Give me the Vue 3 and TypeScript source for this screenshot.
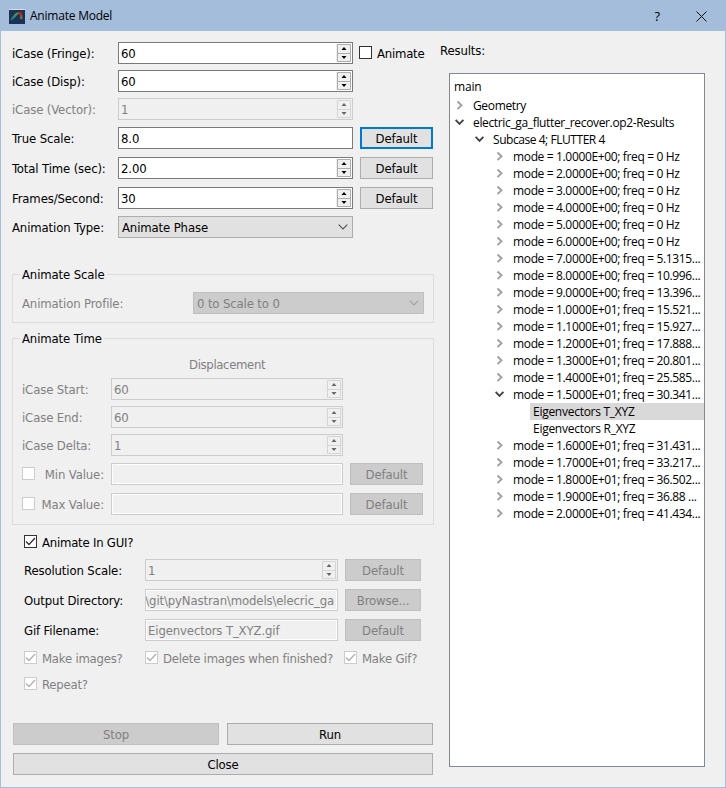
<script setup lang="ts">
interface SpinRow { label: string; value: string; cls: string; spin: boolean; disabled?: boolean; check?: boolean; button?: boolean; focus?: boolean }
interface TreeRow { level: number; text: string; state: 'open' | 'closed' | 'leaf'; selected?: boolean }

const topRows: SpinRow[] = [
  { label: 'iCase (Fringe):', value: '60', cls: 'r-first', spin: true, check: true },
  { label: 'iCase (Disp):', value: '60', cls: 'r-case', spin: true },
  { label: 'iCase (Vector):', value: '1', cls: 'r-case', spin: true, disabled: true },
  { label: 'True Scale:', value: '8.0', cls: 'r-scale', spin: false, button: true, focus: true },
  { label: 'Total Time (sec):', value: '2.00', cls: 'r-time', spin: true, button: true },
  { label: 'Frames/Second:', value: '30', cls: 'r-time', spin: true, button: true },
]
const timeRows = [
  { label: 'iCase Start:', value: '60' },
  { label: 'iCase End:', value: '60' },
  { label: 'iCase Delta:', value: '1' },
]
const limits = ['Min Value:', 'Max Value:']

const mode = (n: string, freq: string, open = false): TreeRow => ({
  level: 2, text: `mode = ${n}; freq = ${freq}`, state: open ? 'open' : 'closed',
})
const tree: TreeRow[] = [
  { level: 0, text: 'Geometry', state: 'closed' },
  { level: 0, text: 'electric_ga_flutter_recover.op2-Results', state: 'open' },
  { level: 1, text: 'Subcase 4; FLUTTER 4', state: 'open' },
  mode('1.0000E+00', '0 Hz'),
  mode('2.0000E+00', '0 Hz'),
  mode('3.0000E+00', '0 Hz'),
  mode('4.0000E+00', '0 Hz'),
  mode('5.0000E+00', '0 Hz'),
  mode('6.0000E+00', '0 Hz'),
  mode('7.0000E+00', '5.1315...'),
  mode('8.0000E+00', '10.996...'),
  mode('9.0000E+00', '13.396...'),
  mode('1.0000E+01', '15.521...'),
  mode('1.1000E+01', '15.927...'),
  mode('1.2000E+01', '17.888...'),
  mode('1.3000E+01', '20.801...'),
  mode('1.4000E+01', '25.585...'),
  mode('1.5000E+01', '30.341...', true),
  { level: 3, text: 'Eigenvectors T_XYZ', state: 'leaf', selected: true },
  { level: 3, text: 'Eigenvectors R_XYZ', state: 'leaf' },
  mode('1.6000E+01', '31.431...'),
  mode('1.7000E+01', '33.217...'),
  mode('1.8000E+01', '36.502...'),
  mode('1.9000E+01', '36.88 ...'),
  mode('2.0000E+01', '41.434...'),
]
</script>

<template>
  <div class="window">
    <header class="titlebar">
      <svg class="app-icon" width="16" height="15" viewBox="0 0 16 15">
        <defs>
          <linearGradient id="rainbow" x1="0" y1="1" x2="1" y2="0">
            <stop offset="0" stop-color="#1f5fb0" />
            <stop offset=".35" stop-color="#1faa6a" />
            <stop offset=".6" stop-color="#6ca828" />
            <stop offset=".8" stop-color="#c8441c" />
            <stop offset="1" stop-color="#a02418" />
          </linearGradient>
        </defs>
        <rect width="16" height="15" fill="#1d3157" />
        <rect width="16" height="1" fill="#d8dce4" />
        <path d="M2 11 L8 4.5 L12 3.8 L12.4 10" fill="none" stroke="url(#rainbow)" stroke-width="2.2" opacity=".85" />
        <path d="M5 6.5 L9 4" stroke="#28a850" stroke-width="1.4" />
      </svg>
      <span class="title">Animate Model</span>
      <span class="help">?</span>
      <svg class="close" width="11" height="11" viewBox="0 0 11 11"><path d="M.5 .5 L10.5 10.5 M10.5 .5 L.5 10.5" stroke="#111" fill="none" /></svg>
    </header>

    <main class="content">
      <section class="left">
        <div class="top-form">
          <div v-for="r in topRows" :key="r.label" class="row" :class="[r.cls, { disabled: r.disabled }]">
            <span class="label t">{{ r.label }}</span>
            <div class="field" :class="{ disabled: r.disabled }">
              <span class="value t">{{ r.value }}</span>
              <span v-if="r.spin" class="spin"><svg viewBox="0 0 14 18"><path d="M7 3 L9.5 6 H4.5 Z M4.5 12 H9.5 L7 15 Z" /><path class="divider" d="M.5 .5 H13.5 V17.5 H.5 Z M0 9.5 H14" /></svg></span>
            </div>
            <div v-if="r.check" class="check-item"><span class="box"></span><span class="t">Animate</span></div>
            <button v-if="r.button" class="btn" :class="{ focus: r.focus }">Default</button>
          </div>
          <div class="row r-type">
            <span class="label t">Animation Type:</span>
            <div class="combo"><span class="t">Animate Phase</span><svg width="10" height="6" viewBox="0 0 10 6"><path d="M.7 .7 L5 5 L9.3 .7" /></svg></div>
          </div>
        </div>

        <div class="group scale">
          <span class="legend">Animate Scale</span>
          <div class="profile disabled">
            <span class="t">Animation Profile:</span>
            <div class="combo disabled"><span class="t">0 to Scale to 0</span><svg width="10" height="6" viewBox="0 0 10 6"><path d="M.7 .7 L5 5 L9.3 .7" /></svg></div>
          </div>
        </div>

        <div class="group time">
          <span class="legend">Animate Time</span>
          <div class="disp disabled">Displacement</div>
          <div class="time-rows">
            <div v-for="r in timeRows" :key="r.label" class="trow disabled">
              <span class="t">{{ r.label }}</span>
              <div class="field disabled">
                <span class="value t">{{ r.value }}</span>
                <span class="spin"><svg viewBox="0 0 14 18"><path d="M7 3 L9.5 6 H4.5 Z M4.5 12 H9.5 L7 15 Z" /><path class="divider" d="M.5 .5 H13.5 V17.5 H.5 Z M0 9.5 H14" /></svg></span>
              </div>
            </div>
          </div>
          <div class="limit-rows">
            <div v-for="l in limits" :key="l" class="trow disabled">
              <div class="limit"><span class="box dim"></span><span class="t">{{ l }}</span></div>
              <div class="field disabled line"></div>
              <button class="btn disabled">Default</button>
            </div>
          </div>
        </div>

        <div class="gui">
          <div class="check-item main-check"><span class="box"><svg viewBox="0 0 11 11"><path d="M1 5.5 L4 8.5 L10 2" /></svg></span><span class="t">Animate In GUI?</span></div>
          <div class="grow">
            <span class="t">Resolution Scale:</span>
            <div class="field disabled"><span class="value t">1</span><span class="spin"><svg viewBox="0 0 14 18"><path d="M7 3 L9.5 6 H4.5 Z M4.5 12 H9.5 L7 15 Z" /><path class="divider" d="M.5 .5 H13.5 V17.5 H.5 Z M0 9.5 H14" /></svg></span></div>
            <button class="btn disabled">Default</button>
          </div>
          <div class="grow">
            <span class="t">Output Directory:</span>
            <div class="field disabled line path"><span class="value t">\git\pyNastran\models\elecric_ga</span></div>
            <button class="btn disabled">Browse...</button>
          </div>
          <div class="grow">
            <span class="t">Gif Filename:</span>
            <div class="field disabled line"><span class="value t">Eigenvectors T_XYZ.gif</span></div>
            <button class="btn disabled">Default</button>
          </div>
          <div class="checks">
            <div v-for="c in ['Make images?', 'Delete images when finished?', 'Make Gif?', 'Repeat?']" :key="c" class="check-item disabled">
              <span class="box dim"><svg viewBox="0 0 11 11"><path d="M1 5.5 L4 8.5 L10 2" /></svg></span><span class="t">{{ c }}</span>
            </div>
          </div>
        </div>

        <div class="actions">
          <button class="btn disabled">Stop</button>
          <button class="btn">Run</button>
          <button class="btn wide">Close</button>
        </div>
      </section>

      <section class="right">
        <div class="results">Results:</div>
        <div class="tree">
          <div class="tree-head">main</div>
          <div v-for="(t, i) in tree" :key="i" class="node" :class="['l' + t.level, { selected: t.selected }]">
            <span class="arrow">
              <svg v-if="t.state === 'closed'" width="9" height="11" viewBox="0 0 9 11"><path d="M2.5 1.5 L6.5 5.3 L2.5 9.1" stroke="#a0a0a0" /></svg>
              <svg v-else-if="t.state === 'open'" width="10" height="11" viewBox="0 0 10 11"><path d="M.6 2.8 L4.5 6.8 L8.4 2.8" stroke="#404040" /></svg>
            </span>
            <span class="node-text">{{ t.text }}</span>
          </div>
        </div>
      </section>
    </main>
  </div>
</template>

<style>
body { margin: 0; background: #f0f0f0; }
</style>

<style scoped>
* { box-sizing: border-box; }
.window {
  width: 726px; height: 788px; overflow: hidden; background: #f0f0f0;
  border: 1px solid #a4bddb; color: #000;
  font: 13px/16px "DejaVu Sans Condensed", "DejaVu Sans", sans-serif;
  white-space: nowrap;
  display: flex; flex-direction: column;
}
.titlebar {
  height: 30px; flex: none; background: #a4bddb; display: flex; align-items: center;
  padding: 0 18px 0 8px; font-family: "Open Sans", "Noto Sans", sans-serif; font-size: 12px;
}
.title { margin-left: 5px; flex: 1; letter-spacing: -.22px; }
.help { margin-right: 36px; font-size: 13px; }
.content { display: flex; flex: 1; min-height: 0; }
.left, .results { font-stretch: condensed; letter-spacing: -.13px; }
.left { width: 433px; padding-left: 11px; }
.t { padding-top: 2px; }
.top-form { padding-top: 11px; }
.row { display: grid; grid-template-columns: 106px 235px 73px; height: 22px; align-items: center; }
.row > .btn { margin-left: 7px; width: 73px; }
.row > .check-item { margin-left: 6px; }
.row > .check-item .box { margin-top: -1px; }
.r-case { margin-top: 6px; }
.r-scale { margin-top: 7px; }
.r-time { margin-top: 8px; }
.r-type { margin-top: 7px; }
.disabled { color: #808080; }
.field {
  height: 22px; background: #fff; border: 1px solid #7a7a7a; display: flex; align-items: center;
  padding: 0 1px 0 2px; overflow: hidden;
}
.field.disabled { background: #f0f0f0; border-color: #ccc; }
.field.line { box-shadow: inset 0 0 0 1px #fff; }
.value { flex: 1; }
.spin { width: 14px; height: 18px; background: #f0f0f0; box-shadow: -1px 0 #eee; }
.spin svg { display: block; width: 14px; height: 18px; fill: #000; }
.spin .divider { fill: none; stroke: #acacac; }
.disabled .spin svg { fill: #666; }
.disabled .spin .divider { stroke: #d5d5d5; }
.btn {
  height: 22px; padding: 2px 0 0; font: inherit; letter-spacing: inherit; color: #000; background: #e1e1e1;
  border: 1px solid #adadad; border-radius: 0; text-align: center;
}
.btn.focus { border: 2px solid #0078d7; }
.btn.disabled { background: #ccc; border-color: #bfbfbf; color: #808080; }
.check-item { display: flex; align-items: center; gap: 5px; letter-spacing: -.22px; }
.box { width: 13px; height: 13px; border: 1px solid #333; background: #fff; flex: none; display: block; }
.box.dim { border-color: #ccc; }
.box svg { display: block; width: 11px; height: 11px; }
.box path { fill: none; stroke: #333; stroke-width: 1.3; }
.box.dim path { stroke: #b0b0b0; }
.combo {
  height: 22px; border: 1px solid #adadad; background: #e1e1e1; display: flex; align-items: center;
  justify-content: space-between; padding: 0 4px 0 3px;
}
.combo path { fill: none; stroke: #555; stroke-width: 1.2; }
.combo.disabled { background: #ccc; border-color: #bfbfbf; }
.combo.disabled path { stroke: #a5a5a5; }
.group { width: 422px; border: 1px solid #dcdcdc; padding: 0 9px; }
.legend { display: block; width: max-content; margin-top: -8px; background: #f0f0f0; padding: 0 2px; margin-left: -2px; height: 16px; }
.scale { height: 49px; margin-top: 36px; }
.profile { display: grid; grid-template-columns: 171px 231px; margin-top: 9px; align-items: center; }
.time { height: 187px; margin-top: 15px; }
.disp { margin-top: 10px; padding-left: 167px; height: 16px; letter-spacing: -.35px; }
.time-rows { display: grid; gap: 6px; margin-top: 5px; }
.limit-rows { display: grid; gap: 8px; margin-top: 7px; }
.trow { display: grid; grid-template-columns: 89px 232px 73px; align-items: center; }
.trow > .btn { margin-left: 7px; width: 73px; }
.limit { display: flex; justify-content: space-between; align-items: center; padding-right: 7px; }
.limit .box { margin-top: -1px; }
.gui { margin-top: 9px; padding-left: 12px; }
.main-check { height: 16px; margin-bottom: 9px; }
.main-check .box { margin-top: -1px; }
.grow { display: grid; grid-template-columns: 121px 193px 76px; height: 22px; align-items: center; margin-bottom: 8px; }
.grow > .btn { margin-left: 7px; width: 76px; }
.path { justify-content: flex-end; padding: 0 3px 0 0; }
.path .value { flex: none; }
.checks { display: grid; grid-template-columns: 121px 199px 90px; grid-auto-rows: 16px; row-gap: 10px; margin-top: 9px; }
.checks .box { margin-top: -1px; }
.actions { display: grid; grid-template-columns: 206px 206px; gap: 8px; margin: 31px 0 0 1px; }
.wide { grid-column: span 2; }
.right { padding-left: 6px; }
.results { margin-top: 12px; height: 16px; }
.tree {
  margin: 14px 0 0 9px; width: 256px; height: 694px; background: #fff; border: 1px solid #828790;
  font-family: "Open Sans", "Noto Sans", sans-serif; font-size: 12px; line-height: 17px;
  letter-spacing: -.35px;
}
.tree-head { height: 23px; padding: 4px 0 0 4px; }
.node { height: 17px; display: flex; }
.arrow { width: 15px; padding-top: 3px; flex: none; }
.arrow svg { display: block; }
.arrow path { fill: none; stroke-width: 1.9; }
.node-text { flex: 1; padding-left: 3px; }
.tree-head { letter-spacing: -.2px; }
.l0 { padding-left: 5px; }
.l1 { padding-left: 25px; letter-spacing: -.45px; }
.l2 { padding-left: 45px; }
.l3 { padding-left: 65px; letter-spacing: -.27px; }
.selected .node-text { background: #d9d9d9; }
</style>
